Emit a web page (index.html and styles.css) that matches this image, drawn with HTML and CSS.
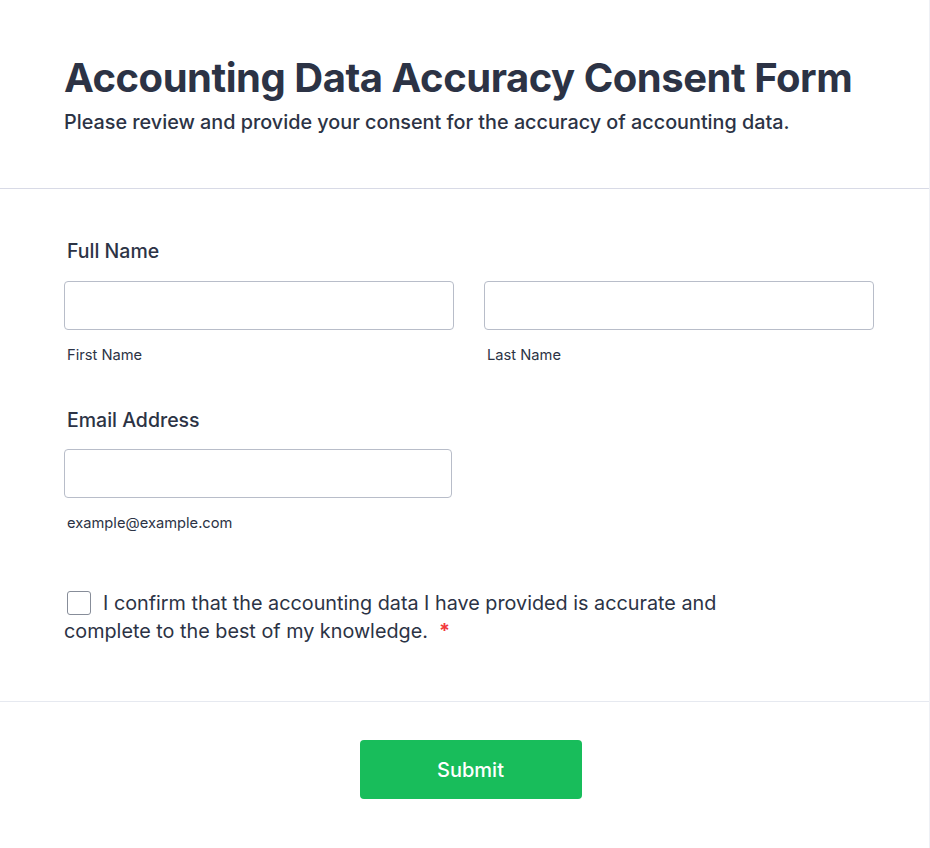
FILE: index.html
```html
<!DOCTYPE html>
<html lang="en">
<head>
<meta charset="utf-8">
<title>Accounting Data Accuracy Consent Form</title>
<link rel="stylesheet" href="styles.css">
</head>
<body>
<div class="form">
  <header class="form-header">
    <h1 class="title">Accounting Data Accuracy Consent Form</h1>
    <p class="subtitle">Please review and provide your consent for the accuracy of accounting data.</p>
  </header>
  <main class="form-body">
    <div class="field name-field">
      <div class="label">Full Name</div>
      <div class="name-row">
        <div class="sub-field">
          <input class="input" type="text" aria-label="First Name">
          <div class="sublabel">First Name</div>
        </div>
        <div class="sub-field">
          <input class="input" type="text" aria-label="Last Name">
          <div class="sublabel">Last Name</div>
        </div>
      </div>
    </div>
    <div class="field email-field">
      <div class="label">Email Address</div>
      <div class="sub-field email">
        <input class="input" type="email" aria-label="Email Address">
        <div class="sublabel">example@example.com</div>
      </div>
    </div>
    <p class="consent"><span class="checkbox"></span>I confirm that the accounting data I have provided is accurate and complete to the best of my knowledge.<span class="required">*</span></p>
  </main>
  <footer class="form-footer">
    <button class="submit" type="button">Submit</button>
  </footer>
</div>
</body>
</html>
```
FILE: styles.css
```css
html, body {
  margin: 0;
  padding: 0;
  background: #ffffff;
}
body {
  font-family: Inter, "Noto Sans", "Liberation Sans", sans-serif;
  color: #2c3345;
}
.form {
  width: 929px;
  min-height: 848px;
  border-right: 1px solid #eef0f5;
  background: #ffffff;
}
.form-header {
  padding: 54px 64px 0;
  height: 134px;
  border-bottom: 1px solid #d8dae6;
}
.title {
  margin: 0;
  font-size: 40px;
  line-height: 48px;
  font-weight: 700;
  letter-spacing: -0.47px;
  color: #2c3345;
}
.subtitle {
  margin: 8px 0 0;
  font-size: 19.8px;
  line-height: 24px;
  font-weight: 500;
  color: #2c3345;
}
.form-body {
  padding: 50px 55px 0 64px;
  height: 462px;
  border-bottom: 1px solid #e6e9f0;
}
.field {
  display: flex;
  flex-direction: column;
}
.label {
  font-size: 19.5px;
  line-height: 24px;
  font-weight: 500;
  padding-left: 3px;
  margin-bottom: 17px;
}
.name-field .label {
  margin-bottom: 18px;
}
.name-row {
  display: flex;
  gap: 30px;
}
.sub-field {
  display: flex;
  flex-direction: column;
  width: 391px;
}
.sub-field.email {
  width: 388px;
}
.input {
  box-sizing: border-box;
  width: 100%;
  height: 49px;
  border: 1px solid #b8bdc9;
  border-radius: 4px;
  background: #ffffff;
  margin: 0;
  padding: 0 10px;
  font: inherit;
}
.sublabel {
  font-size: 14.7px;
  line-height: 18px;
  padding-left: 3px;
  margin-top: 16px;
  color: #2c3345;
}
.email-field {
  margin-top: 44px;
}
.consent {
  margin: 57px 0 0;
  width: 700px;
  font-size: 19.8px;
  line-height: 28px;
  color: #2c3345;
}
.checkbox {
  display: inline-block;
  box-sizing: border-box;
  width: 24px;
  height: 24px;
  border: 1.5px solid #878d99;
  border-radius: 3px;
  vertical-align: -5px;
  margin-left: 3px;
  margin-right: 12px;
  background: #ffffff;
}
.required {
  color: #f23a3c;
  font-weight: 700;
  margin-left: 11px;
}
.form-footer {
  display: flex;
  justify-content: center;
  padding: 38px 0 0 12px;
}
.submit {
  width: 222px;
  height: 59px;
  border: none;
  border-radius: 4px;
  background: #18bd5b;
  color: #ffffff;
  font-family: inherit;
  font-size: 20px;
  font-weight: 500;
  cursor: pointer;
}
```
